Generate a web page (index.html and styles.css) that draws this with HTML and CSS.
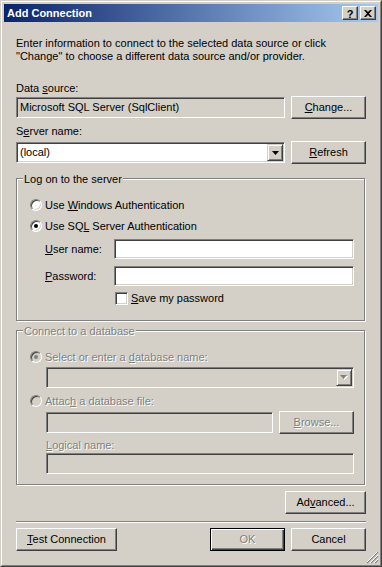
FILE: index.html
```html
<!DOCTYPE html>
<html>
<head>
<meta charset="utf-8">
<title>Add Connection</title>
<link rel="stylesheet" href="styles.css">
</head>
<body>
<div class="window">
  <div class="frame">
    <div class="titlebar">
      <span class="title">Add Connection</span>
      <div class="caption-buttons">
        <span class="cbtn cbtn-help">?</span>
        <span class="cbtn"><svg width="8" height="7" viewBox="0 0 8 7"><path d="M0 0h2l2 2 2-2h2L5 3.5 8 7H6L4 5 2 7H0l3-3.5z" fill="#000"/></svg></span>
      </div>
    </div>
    <div class="client">
      <p class="intro">Enter information to connect to the selected data source or click<br>"Change" to choose a different data source and/or provider.</p>

      <div class="label lbl-ds">Data <u>s</u>ource:</div>
      <div class="row row-ds">
        <div class="textbox readonly">Microsoft SQL Server (SqlClient)</div>
        <div class="button"><span><u>C</u>hange...</span></div>
      </div>

      <div class="label lbl-sn">S<u>e</u>rver name:</div>
      <div class="row row-sn">
        <div class="combo">
          <span class="combo-text">(local)</span>
          <span class="drop"><svg width="7" height="4" viewBox="0 0 7 4"><path d="M0 0h7L3.5 4z" fill="#000"/></svg></span>
        </div>
        <div class="button"><span><u>R</u>efresh</span></div>
      </div>

      <div class="group group-logon">
        <div class="group-title">Log on to the server</div>
        <div class="option opt-win"><span class="radio"></span><span>Use <u>W</u>indows Authentication</span></div>
        <div class="option opt-sql"><span class="radio checked"></span><span>Use SQ<u>L</u> Server Authentication</span></div>
        <div class="field field-user">
          <span class="field-label"><u>U</u>ser name:</span>
          <div class="textbox field-box"></div>
        </div>
        <div class="field field-pass">
          <span class="field-label"><u>P</u>assword:</span>
          <div class="textbox field-box"></div>
        </div>
        <div class="check-row"><span class="checkbox"></span><span><u>S</u>ave my password</span></div>
      </div>

      <div class="group group-db disabled">
        <div class="group-title">Connect to a database</div>
        <div class="option opt-select"><span class="radio checked"></span><span>Select or enter a <u>d</u>atabase name:</span></div>
        <div class="combo combo-db">
          <span class="combo-text"></span>
          <span class="drop"><svg width="8" height="5" viewBox="0 0 8 5"><path d="M1 1h7L4.5 5z" fill="#fff"/><path d="M0 0h7L3.5 4z" fill="#808080"/></svg></span>
        </div>
        <div class="option opt-attach"><span class="radio"></span><span>Attac<u>h</u> a database file:</span></div>
        <div class="row row-attach">
          <div class="textbox"></div>
          <div class="button"><span><u>B</u>rowse...</span></div>
        </div>
        <div class="sublabel"><u>L</u>ogical name:</div>
        <div class="textbox logical"></div>
      </div>

      <div class="advanced-row">
        <div class="button btn-advanced"><span>Ad<u>v</u>anced...</span></div>
      </div>

      <div class="separator"></div>

      <div class="footer">
        <div class="button btn-test"><span><u>T</u>est Connection</span></div>
        <div class="footer-right">
          <div class="button default disabled-btn"><span>OK</span></div>
          <div class="button"><span>Cancel</span></div>
        </div>
      </div>
    </div>
  </div>
  <svg class="grip" width="12" height="12" viewBox="0 0 12 12">
    <path d="M11 0L0 11M11 4L4 11M11 8L8 11" stroke="#808080" stroke-width="1.2"/>
    <path d="M11 -1L-1 11M11 3L3 11M11 7L7 11" stroke="#fff" stroke-width="1"/>
  </svg>
</div>
</body>
</html>
```

FILE: styles.css
```css
* { box-sizing: border-box; }
html, body { margin: 0; padding: 0; }
body {
  width: 382px;
  height: 567px;
  overflow: hidden;
  background: #d4d0c8;
  color: #000;
  font-family: "Liberation Sans", Arial, sans-serif;
  font-size: 11px;
  line-height: 13px;
}
u { text-decoration: underline; text-underline-offset: 1px; }

.window {
  position: relative;
  width: 382px;
  height: 567px;
  border: 1px solid;
  border-color: #d4d0c8 #404040 #404040 #d4d0c8;
}
.frame {
  height: 100%;
  border: 1px solid;
  border-color: #fff #808080 #808080 #fff;
  padding: 2px;
  display: flex;
  flex-direction: column;
}
.titlebar {
  flex: none;
  height: 18px;
  display: flex;
  align-items: center;
  justify-content: space-between;
  padding: 0 2px 0 3px;
  background: linear-gradient(to right, #0a246a, #a6caf0);
}
.title {
  color: #fff;
  font-weight: bold;
  font-size: 11px;
  line-height: 13px;
}
.caption-buttons { display: flex; gap: 2px; }
.cbtn {
  width: 16px;
  height: 14px;
  display: flex;
  align-items: center;
  justify-content: center;
  background: #d4d0c8;
  border: 1px solid;
  border-color: #fff #404040 #404040 #fff;
  box-shadow: inset -1px -1px 0 #808080;
}
.cbtn-help {
  font-weight: bold;
  font-size: 11px;
  line-height: 12px;
  padding-top: 1px;
}

.client {
  flex: 1;
  padding: 0 12px;
}
.intro { margin: 15px 0 0; line-height: 13px; }
.label { line-height: 13px; }
.lbl-ds { margin-top: 19px; }
.lbl-sn { margin-top: 6px; }

.row {
  display: flex;
  align-items: center;
  gap: 6px;
  height: 23px;
}
.row-ds { margin-top: 1px; }
.row-sn { margin-top: 3px; }
.row > .textbox, .row > .combo { flex: 1; }

.textbox {
  height: 21px;
  background: #fff;
  border: 1px solid;
  border-color: #808080 #fff #fff #808080;
  box-shadow: inset 1px 1px 0 #404040, inset -1px -1px 0 #d4d0c8;
  padding: 0 3px;
  line-height: 19px;
  white-space: nowrap;
  overflow: hidden;
}
.textbox.readonly { background: #d4d0c8; }

.combo {
  height: 21px;
  display: flex;
  background: #fff;
  border: 1px solid;
  border-color: #808080 #fff #fff #808080;
  box-shadow: inset 1px 1px 0 #404040, inset -1px -1px 0 #d4d0c8;
  padding: 1px;
}
.combo-text { flex: 1; padding-left: 2px; line-height: 17px; }
.drop {
  flex: none;
  width: 16px;
  height: 17px;
  display: flex;
  align-items: center;
  justify-content: center;
  background: #d4d0c8;
  border: 1px solid;
  border-color: #d4d0c8 #404040 #404040 #d4d0c8;
  box-shadow: inset 1px 1px 0 #fff, inset -1px -1px 0 #808080;
}

.button {
  flex: none;
  width: 75px;
  height: 23px;
  display: flex;
  align-items: center;
  justify-content: center;
  background: #d4d0c8;
  border: 1px solid;
  border-color: #fff #404040 #404040 #fff;
  box-shadow: inset -1px -1px 0 #808080;
  line-height: 13px;
  white-space: nowrap;
}
.button.default {
  border: 1px solid #000;
  box-shadow: inset 1px 1px 0 #fff, inset -1px -1px 0 #404040, inset -2px -2px 0 #808080;
}
.disabled-btn span, .disabled .button span {
  color: #808080;
  text-shadow: 1px 1px 0 #fff;
}

.group {
  width: 349px;
  border: 1px solid #808080;
  box-shadow: inset 1px 1px 0 #fff, 1px 1px 0 #fff;
  padding: 0 0 0 13px;
}
.group-logon { margin-top: 14px; height: 143px; }
.group-db { margin-top: 9px; height: 155px; }
.group-title {
  width: fit-content;
  margin: -6px 0 0 -7px;
  padding: 0 1px 0 1px;
  background: #d4d0c8;
  line-height: 13px;
}
.disabled, .disabled .group-title {
  color: #808080;
  text-shadow: 1px 1px 0 #fff;
}

.option {
  display: flex;
  align-items: center;
  gap: 3px;
  height: 16px;
}
.opt-win { margin-top: 11px; }
.opt-sql { margin-top: 5px; }
.opt-select { margin-top: 11px; }
.opt-attach { margin-top: 5px; }

.radio {
  position: relative;
  flex: none;
  width: 12px;
  height: 12px;
  border-radius: 50%;
  background: #fff;
  border: 1px solid;
  border-color: #808080 #fff #fff #808080;
  box-shadow: inset 1px 1px 0 #404040, inset -1px -1px 0 #d4d0c8;
}
.radio.checked::after {
  content: "";
  position: absolute;
  left: 3px;
  top: 3px;
  width: 4px;
  height: 4px;
  border-radius: 50%;
  background: #000;
}
.disabled .radio { background: #d4d0c8; }
.disabled .radio.checked::after { background: #808080; }

.field {
  display: flex;
  align-items: center;
  height: 20px;
  margin-left: 15px;
}
.field-user { margin-top: 5px; }
.field-pass { margin-top: 7px; }
.field-label { width: 69px; flex: none; }
.field-box { width: 240px; height: 20px; line-height: 18px; }

.check-row {
  display: flex;
  align-items: center;
  gap: 3px;
  height: 16px;
  margin: 4px 0 0 85px;
}
.checkbox {
  flex: none;
  width: 13px;
  height: 13px;
  background: #fff;
  border: 1px solid;
  border-color: #808080 #fff #fff #808080;
  box-shadow: inset 1px 1px 0 #404040, inset -1px -1px 0 #d4d0c8;
}

.group-db .combo-db {
  width: 308px;
  margin: 2px 0 0 16px;
  background: #d4d0c8;
}
.disabled .textbox { background: #d4d0c8; }
.row-attach {
  width: 308px;
  margin: 2px 0 0 16px;
  text-shadow: none;
}
.row-attach .textbox { height: 21px; }
.sublabel { margin: 5px 0 0 16px; line-height: 13px; }
.textbox.logical { width: 308px; margin: 1px 0 0 16px; }

.advanced-row {
  display: flex;
  justify-content: flex-end;
  margin-top: 6px;
}
.btn-advanced { width: 81px; }
.separator {
  margin-top: 7px;
  height: 2px;
  border-top: 1px solid #808080;
  border-bottom: 1px solid #fff;
}
.footer {
  display: flex;
  justify-content: space-between;
  margin-top: 5px;
}
.btn-test { width: 101px; }
.footer-right { display: flex; gap: 6px; }

.grip {
  position: absolute;
  right: 2px;
  bottom: 2px;
}
```
